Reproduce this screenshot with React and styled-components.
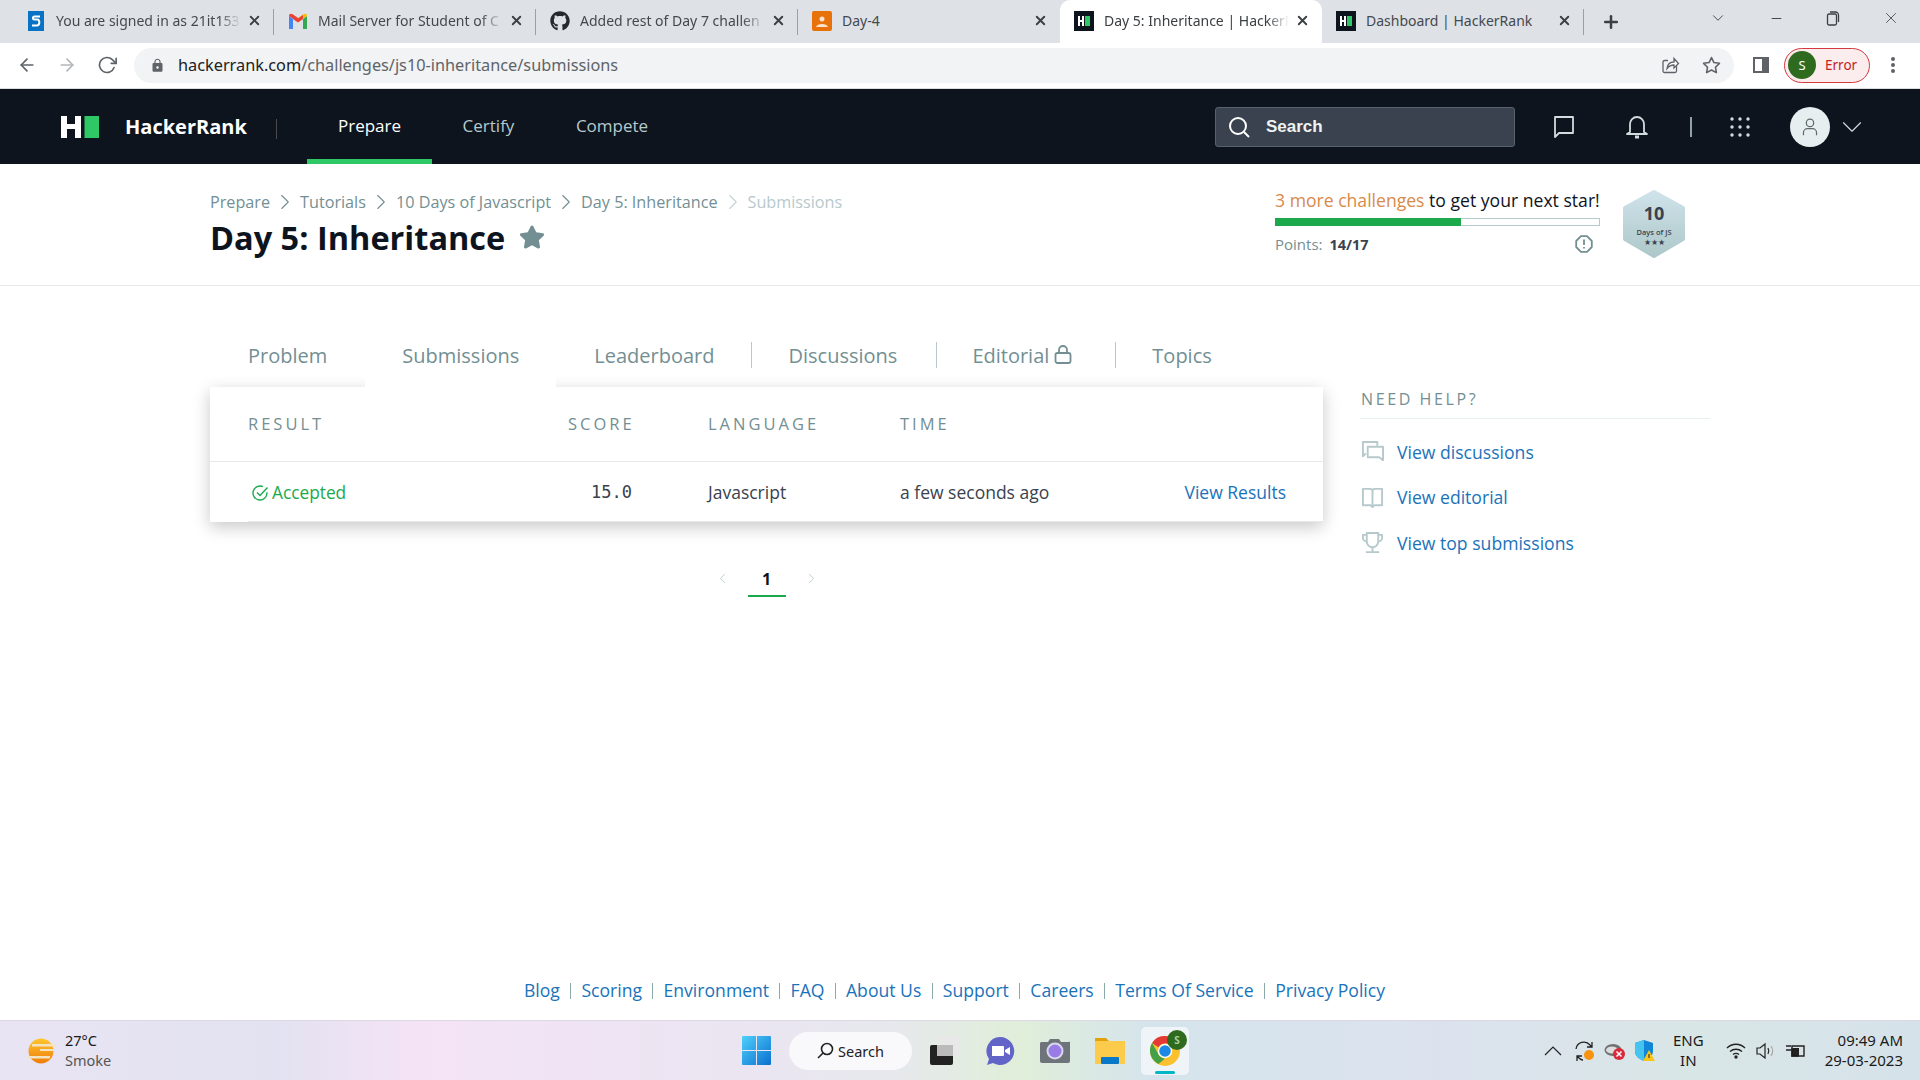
import React from "react";
import styled, { createGlobalStyle } from "styled-components";
import { FaGithub, FaStar } from "react-icons/fa";
import { FiArrowLeft, FiArrowRight, FiRotateCw, FiChevronDown, FiChevronLeft, FiChevronRight, FiStar, FiX, FiPlus, FiMinus } from "react-icons/fi";
import { MdLock } from "react-icons/md";

const GlobalStyle = createGlobalStyle`
    html, body {
        margin: 0;
        padding: 0;
        background: #fff;
        font-family: "Open Sans", sans-serif;
    }
    * { box-sizing: border-box; }
`;

const Screen = styled.div`
    width: 1920px;
    height: 1080px;
    display: flex;
    flex-direction: column;
    overflow: hidden;
`;

/* ---------- browser chrome ---------- */
const TabStrip = styled.div`
    height: 43px;
    background: #dee1e6;
    display: flex;
    padding-left: 12px;
    align-items: stretch;
`;

const Tab = styled.div`
    width: 262px;
    display: flex;
    align-items: center;
    padding: 0 12px 2px 14px;
    position: relative;
    font-family: "Noto Sans", sans-serif;
    font-size: 14px;
    color: ${(p) => (p.$active ? "#3c4043" : "#45494e")};
    background: ${(p) => (p.$active ? "#fff" : "transparent")};
    border-radius: 10px 10px 0 0;

    ${(p) => p.$sep && `
        &::after {
            content: "";
            position: absolute;
            right: 0;
            top: 9px;
            height: 26px;
            width: 1px;
            background: #9aa0a6;
        }
    `}
`;

const Favicon = styled.span`
    width: 20px;
    height: 20px;
    flex: none;
    display: flex;
    align-items: center;
    justify-content: center;
    margin-right: 10px;
`;

const TabTitle = styled.span`
    flex: 1;
    min-width: 0;
    white-space: nowrap;
    overflow: hidden;
    -webkit-mask-image: ${(p) => (p.$fade ? "linear-gradient(90deg, #000 88%, transparent 100%)" : "none")};
`;

const TabClose = styled(FiX)`
    flex: none;
    width: 15px;
    height: 15px;
    margin-left: 6px;
    color: #3c4043;
    stroke-width: 3;
`;

const NewTab = styled(FiPlus)`
    width: 20px;
    height: 20px;
    margin: 12px 0 0 17px;
    color: #3c4043;
    stroke-width: 3;
`;

const WindowControls = styled.div`
    margin-left: auto;
    display: flex;
    align-items: center;
    height: 36px;
    color: #3c4043;
    padding-right: 20px;
    gap: 42px;
`;

const Toolbar = styled.div`
    height: 46px;
    background: #fff;
    border-bottom: 1px solid #dadce0;
    display: flex;
    align-items: center;
    padding-left: 17px;
    padding-bottom: 1px;
`;

const ToolButton = styled.span`
    width: 20px;
    height: 20px;
    margin-right: ${(p) => p.$gap || 20}px;
    color: ${(p) => (p.$off ? "#b4b7ba" : "#5f6368")};
    display: flex;
    align-items: center;
    justify-content: center;
    svg { width: 20px; height: 20px; }
`;

const Omnibox = styled.div`
    width: 1600px;
    height: 35px;
    margin-left: -3px;
    background: #f1f3f4;
    border-radius: 18px;
    display: flex;
    align-items: center;
    padding: 0 13px 0 16px;
    font-family: "Noto Sans", sans-serif;
    font-size: 16.3px;
    color: #5f6368;
    b { font-weight: 400; color: #202124; }
`;

const UrlLock = styled(MdLock)`
    width: 15px;
    height: 15px;
    color: #5f6368;
    margin-right: 13px;
`;

const OmniIcons = styled.div`
    margin-left: auto;
    display: flex;
    align-items: center;
    gap: 22px;
    color: #5f6368;
`;

const ProfilePill = styled.div`
    width: 86px;
    height: 35px;
    margin-left: 14px;
    border: 1.5px solid #d33a3f;
    border-radius: 18px;
    background: #fbeced;
    display: flex;
    align-items: center;
    padding-left: 3px;
    font-family: "Noto Sans", sans-serif;
    font-size: 13.5px;
    color: #c5221f;
`;

const ProfileDot = styled.span`
    width: 28px;
    height: 28px;
    border-radius: 50%;
    background: #2f6b1f;
    color: #fff;
    display: flex;
    align-items: center;
    justify-content: center;
    font-size: 13px;
    margin-right: 9px;
`;

/* ---------- hackerrank nav ---------- */
const Nav = styled.nav`
    height: 75px;
    background: #0e141e;
    display: flex;
    align-items: stretch;
    padding-left: 61px;
    color: #fff;
`;

const Brand = styled.div`
    display: flex;
    align-items: center;
    font-weight: 700;
    font-size: 20px;
    gap: 26px;
    width: 216px;
    position: relative;
    &::after {
        content: "";
        position: absolute;
        right: 0;
        top: 30px;
        height: 20px;
        width: 1px;
        background: #4a4a4a;
    }
`;

const NavLink = styled.div`
    width: ${(p) => p.$w}px;
    display: flex;
    justify-content: center;
    align-items: center;
    font-size: 17px;
    color: ${(p) => (p.$active ? "#fff" : "#b7c9cc")};
    border-bottom: 5px solid ${(p) => (p.$active ? "#2ec866" : "transparent")};
    padding-top: 3px;
`;

const NavLinks = styled.div`
    display: flex;
    margin-left: 30px;
`;

const NavRight = styled.div`
    margin-left: auto;
    display: flex;
    align-items: center;
    padding-right: 51px;
`;

const SearchBox = styled.div`
    width: 300px;
    height: 40px;
    background: #39424e;
    border: 1px solid #576271;
    border-radius: 3px;
    display: flex;
    align-items: center;
    padding-left: 11px;
    gap: 15px;
    font-size: 17px;
    font-weight: 600;
    font-family: "Liberation Sans", sans-serif;
    color: #eef2f3;
`;

const NavIcon = styled.span`
    width: 26px;
    height: 26px;
    display: flex;
    align-items: center;
    justify-content: center;
    color: #d0dcde;
    margin-left: ${(p) => p.$ml}px;
`;

const NavDivider = styled.span`
    width: 2px;
    height: 20px;
    background: #8fa3a6;
    margin-left: 40px;
`;

const AvatarCircle = styled.span`
    width: 40px;
    height: 40px;
    border-radius: 50%;
    background: #e7eeef;
    display: flex;
    align-items: center;
    justify-content: center;
    margin-left: 37px;
    color: #5c6b70;
`;

/* ---------- page head ---------- */
const PageHead = styled.header`
    height: 122px;
    border-bottom: 1px solid #e7eaec;
`;

const Wrap = styled.div`
    width: 1500px;
    margin: 0 auto;
    display: flex;
`;

const HeadLeft = styled.div`
    flex: 1;
    padding-top: 26px;
`;

const Crumbs = styled.div`
    display: flex;
    align-items: center;
    height: 24px;
    font-size: 16.2px;
    color: #738f93;
`;

const Crumb = styled.span`
    color: ${(p) => (p.$dim ? "#b7c9cc" : "#738f93")};
`;

const CrumbSep = styled(FiChevronRight)`
    width: 26px;
    height: 26px;
    margin: 0 2px;
    stroke-width: 1;
    color: ${(p) => (p.$dim ? "#c5d3d5" : "#738f93")};
`;

const Title = styled.h1`
    margin: 2px 0 0 0;
    font-size: 32.5px;
    line-height: 44px;
    font-weight: 700;
    color: #0e141e;
    display: flex;
    align-items: center;
    gap: 14px;
    svg { width: 26px; height: 26px; color: #738f93; margin-top: -2px; }
`;

const HeadRight = styled.div`
    width: 325px;
    margin-right: 21px;
    padding-top: 23px;
    font-size: 17.6px;
    color: #0e141e;
    span.more { color: #d98a4a; }
`;

const ProgressLine = styled.div`
    line-height: 26px;
    white-space: nowrap;
`;

const Bar = styled.div`
    height: 8px;
    margin-top: 5px;
    border: 1px solid #b7c9cc;
    background: #fff;
`;

const BarFill = styled.div`
    height: 8px;
    margin: -1px;
    background: #1ba94c;
`;

const PointsRow = styled.div`
    display: flex;
    align-items: center;
    margin-top: 8px;
    font-size: 15px;
    color: #738f93;
    b { margin-left: 7px; color: #39424e; font-size: 14.5px; }
    svg { margin-left: auto; margin-right: 7px; }
`;

const Badge = styled.svg`
    width: 66px;
    height: 72px;
    margin-top: 24px;
    margin-right: 23px;
`;

/* ---------- content ---------- */
const MainCol = styled.main`
    width: 1113px;
    padding-top: 44px;
`;

const TabsRow = styled.div`
    display: flex;
    height: 57px;
`;

const HrTab = styled.div`
    height: 57px;
    padding: 12px ${(p) => p.$r || 38}px 0 ${(p) => p.$l || 38}px;
    font-size: 20px;
    line-height: 28px;
    color: #738f93;
    display: flex;
    position: relative;
    align-items: flex-start;
    gap: 5px;
    background: ${(p) => (p.$active ? "#fff" : "transparent")};
    z-index: ${(p) => (p.$active ? 2 : 0)};

    ${(p) => p.$sep && `
        &::after {
            content: "";
            position: absolute;
            right: 0;
            top: 12px;
            height: 26px;
            width: 1px;
            background: #b7c9cc;
        }
    `}
`;

const Card = styled.section`
    height: 135px;
    background: #fff;
    box-shadow: 0 5px 16px rgba(0, 0, 0, 0.22);
    position: relative;
    z-index: 1;
`;

const GridRow = styled.div`
    display: grid;
    grid-template-columns: 320px 140px 192px 1fr auto;
    align-items: center;
    margin-left: ${(p) => (p.$head ? 0 : 38)}px;
    padding: ${(p) => (p.$head ? "0 37px 1px 38px" : "0 37px 0 0")};
    height: ${(p) => p.$h}px;
    border-bottom: 1px solid #e7eaec;
`;

const HeadCell = styled.span`
    font-size: 16.5px;
    letter-spacing: 3px;
    color: #738f93;
`;

const Cell = styled.span`
    font-size: 17.5px;
    color: #39424e;
`;

const AcceptedCell = styled.span`
    display: flex;
    align-items: center;
    gap: 3px;
    padding: 1px 0 0 3px;
    color: #1ba94c;
    font-size: 17.3px;
    svg { margin-top: 2px; }
`;

const ScoreCell = styled.span`
    font-family: "DejaVu Sans Mono", monospace;
    font-size: 17px;
    color: #39424e;
    padding-left: 23px;
`;

const ResultLink = styled.span`
    color: #1a73ba;
    font-size: 17.5px;
`;

const Pager = styled.div`
    display: flex;
    align-items: flex-start;
    justify-content: center;
    margin-top: 45px;
    width: 1113px;
    color: #c0cdcf;
    svg { width: 17px; height: 17px; margin-top: 3px; stroke-width: 1.4; }
`;

const PageNum = styled.span`
    width: 38px;
    height: 30px;
    margin: 0 17px;
    text-align: center;
    font-size: 16px;
    line-height: 24px;
    font-weight: 700;
    color: #0e141e;
    border-bottom: 2px solid #1ba94c;
`;

const SideCol = styled.aside`
    width: 350px;
    margin-left: 37px;
    padding-top: 101px;
`;

const SideTitle = styled.div`
    font-size: 16px;
    line-height: 24px;
    letter-spacing: 2.6px;
    color: #738f93;
    padding-left: 1px;
    padding-bottom: 7px;
    border-bottom: 1px solid #e7eeef;
    margin-bottom: 10px;
`;

const SideLink = styled.div`
    height: 45.5px;
    display: flex;
    align-items: center;
    gap: 13px;
    padding-left: 1px;
    font-size: 17.6px;
    color: #1a73ba;
    svg { width: 23px; height: 23px; color: #b7c9cc; flex: none; }
`;

const Body = styled.div`
    flex: 1;
`;

const Footer = styled.footer`
    height: 42px;
    display: flex;
    justify-content: center;
    padding-right: 11px;
    font-size: 17.6px;
    line-height: 24px;
    color: #1a73ba;
`;

const FootSep = styled.span`
    width: 1px;
    height: 16px;
    background: #8aa;
    margin: 5px 10.25px 0;
`;

/* ---------- taskbar ---------- */
const Taskbar = styled.div`
    height: 60px;
    border-top: 1px solid #dcd8e6;
    background: linear-gradient(90deg, #e9e4f3 0%, #e2e2f1 14%, #f4e3f5 22%, #ebe5f2 38%, #e7e8ee 46%, #e0eed9 53%, #d5e4ec 60%, #dbe2ee 75%, #d9e6e6 88%, #d6e2ea 100%);
    display: grid;
    grid-template-columns: 742px auto 1fr;
    align-items: center;
`;

const Weather = styled.div`
    display: flex;
    align-items: center;
    padding-left: 26px;
    gap: 9px;
    font-family: "Noto Sans", sans-serif;
    font-size: 14.5px;
    line-height: 20px;
    color: #1a1a1a;
    small { display: block; font-size: 14.5px; color: #555; }
    div { margin-top: -2px; }
`;

const TaskCenter = styled.div`
    display: flex;
    align-items: center;
`;

const TaskSearch = styled.div`
    width: 123px;
    height: 38px;
    margin: 0 18px;
    border-radius: 19px;
    background: #f9f8fb;
    display: flex;
    align-items: center;
    padding-left: 28px;
    gap: 4px;
    font-family: "Noto Sans", sans-serif;
    font-size: 14.5px;
    color: #222;
`;

const TaskIcon = styled.span`
    width: ${(p) => p.$w || 30}px;
    height: 30px;
    margin-right: ${(p) => p.$mr || 25}px;
    display: flex;
`;

const ActiveApp = styled.div`
    width: 48px;
    height: 48px;
    margin-left: -9px;
    background: #eef4f7;
    border-radius: 5px;
    position: relative;
    padding: 9px;
    &::after {
        content: "";
        position: absolute;
        left: 14px;
        bottom: 1px;
        width: 20px;
        height: 3px;
        border-radius: 2px;
        background: #00b7c3;
    }
`;

const AppBadge = styled.span`
    position: absolute;
    top: 3px;
    right: 2px;
    width: 20px;
    height: 20px;
    border-radius: 50%;
    background: #2f6b1f;
    color: #a9cf98;
    font-family: "Noto Sans", sans-serif;
    font-weight: 700;
    font-size: 10px;
    text-align: center;
    line-height: 20px;
`;

const Tray = styled.div`
    display: flex;
    align-items: center;
    justify-content: flex-end;
    padding-right: 17px;
    font-family: "Noto Sans", sans-serif;
    font-size: 15px;
    color: #1a1a1a;
`;

const TrayIcon = styled.span`
    display: flex;
    margin-right: ${(p) => p.$mr || 10}px;
`;

const TrayText = styled.div`
    text-align: ${(p) => p.$align};
    line-height: 20px;
    margin-top: -2px;
    margin-right: ${(p) => p.$mr || 0}px;
`;

/* ---------- small drawings ---------- */
const HrMark = ({ size = 20 }) => (
    <svg width={size} height={size} viewBox="0 0 20 20">
        <rect width="20" height="20" fill="#0e141e" />
        <path d="M4 5h2v4h2V5h2v10H8v-4H6v4H4z" fill="#fff" />
        <rect x="11" y="5" width="5" height="10" fill="#2ec866" />
    </svg>
);

const GmailIcon = () => (
    <svg width="20" height="16" viewBox="0 0 20 16">
        <path d="M1 16V3l4 3v10z" fill="#4285f4" />
        <path d="M15 16V6l4-3v13z" fill="#34a853" />
        <path d="M1 3c0-2 2-3 4-1.5L10 5v4L1 3z" fill="#ea4335" />
        <path d="M19 3c0-2-2-3-4-1.5L10 5v4l9-6z" fill="#fbbc04" />
        <path d="M5 2l5 3.5L15 2v4l-5 3.5L5 6z" fill="#ea4335" />
    </svg>
);

const ShareIcon = () => (
    <svg width="20" height="20" viewBox="0 0 20 20" fill="none" stroke="#5f6368" strokeWidth="1.3">
        <path d="M16.5 10.5V16a1.5 1.5 0 0 1-1.5 1.5H4.5A1.5 1.5 0 0 1 3 16V7a1.5 1.5 0 0 1 1.5-1.5H8" />
        <path d="M7 13.5c.5-4 3-6.5 7-6.5V3.5l4.5 5L14 13v-3c-3 0-5 1-7 3.5z" fill="#fff" />
    </svg>
);

const InfoOctagon = () => (
    <svg width="18" height="18" viewBox="0 0 18 18" fill="none">
        <path d="M6 1.2h6L16.8 6v6L12 16.8H6L1.2 12V6z" stroke="#738f93" strokeWidth="1.8" strokeLinejoin="round" />
        <path d="M9 4.5v5.5M9 12v1.5" stroke="#738f93" strokeWidth="1.8" />
    </svg>
);

const Chrome = ({ size = 30 }) => (
    <svg width={size} height={size} viewBox="0 0 30 30">
        <circle cx="15" cy="15" r="15" fill="#fbc02d" />
        <path d="M15 0a15 15 0 0 1 13 7.5H15a7.5 7.5 0 0 0-6.5 3.75L2 7A15 15 0 0 1 15 0z" fill="#e53935" />
        <path d="M2 7l6.5 11.25A7.5 7.5 0 0 0 15 22.5L8.5 28A15 15 0 0 1 2 7z" fill="#43a047" />
        <circle cx="15" cy="15" r="7.2" fill="#fff" />
        <circle cx="15" cy="15" r="5.8" fill="#1e88e5" />
    </svg>
);

const App = () => {
    const tabs = [
        { title: "You are signed in as 21it153", icon: <svg width="16" height="20" viewBox="0 0 16 20"><rect width="16" height="20" fill="#0872c4" /><path d="M12 5.5H6.5c-2 0-2 3 0 3h3c2.5 0 2.5 6-.5 6H4" stroke="#fff" strokeWidth="2" fill="none" /></svg> },
        { title: "Mail Server for Student of C", icon: <GmailIcon /> },
        { title: "Added rest of Day 7 challen", icon: <FaGithub size={20} color="#24292f" /> },
        { title: "Day-4", plain: true, icon: <svg width="20" height="20" viewBox="0 0 20 20"><rect width="20" height="20" rx="2" fill="#e8710a" /><circle cx="10" cy="8" r="2.5" fill="#fbe3cc" /><path d="M4 16c1-4 11-4 12 0z" fill="#fbe3cc" /></svg> },
        { title: "Day 5: Inheritance | HackerR", active: true, icon: <HrMark /> },
        { title: "Dashboard | HackerRank", plain: true, icon: <HrMark /> },
    ];
    const footerLinks = ["Blog", "Scoring", "Environment", "FAQ", "About Us", "Support", "Careers", "Terms Of Service", "Privacy Policy"];

    return (
        <Screen>
            <GlobalStyle />
            <TabStrip>
                {tabs.map((tab, index) => (
                    <Tab key={index} $active={tab.active} $sep={!tab.active && index !== 3}>
                        <Favicon>{tab.icon}</Favicon>
                        <TabTitle $fade={!tab.plain}>{tab.title}</TabTitle>
                        <TabClose />
                    </Tab>
                ))}
                <NewTab />
                <WindowControls>
                    <FiChevronDown size={18} strokeWidth={1.2} />
                    <FiMinus size={15} strokeWidth={1.5} />
                    <svg width="14" height="15" viewBox="0 0 14 15" fill="none" stroke="#3c4043" strokeWidth="1.3"><rect x="1.5" y="3" width="9" height="11" rx="1.5" /><path d="M4 1h5.5A3 3 0 0 1 12.5 4v7" /></svg>
                    <FiX size={18} strokeWidth={1.1} />
                </WindowControls>
            </TabStrip>

            <Toolbar>
                <ToolButton><FiArrowLeft /></ToolButton>
                <ToolButton $off><FiArrowRight /></ToolButton>
                <ToolButton $gap={20}><FiRotateCw /></ToolButton>
                <Omnibox>
                    <UrlLock />
                    <span><b>hackerrank.com</b>/challenges/js10-inheritance/submissions</span>
                    <OmniIcons>
                        <ShareIcon />
                        <FiStar size={19} />
                    </OmniIcons>
                </Omnibox>
                <svg width="18" height="18" viewBox="0 0 18 18" style={{ marginLeft: 18 }}>
                    <path d="M1 1h16v16H1z" fill="#5f6368" />
                    <path d="M3 3h7v12H3z" fill="#fff" />
                </svg>
                <ProfilePill>
                    <ProfileDot>S</ProfileDot>
                    Error
                </ProfilePill>
                <svg width="4" height="18" viewBox="0 0 4 18" style={{ marginLeft: 21 }} fill="#5f6368">
                    <circle cx="2" cy="3" r="2" /><circle cx="2" cy="9" r="2" /><circle cx="2" cy="15" r="2" />
                </svg>
            </Toolbar>

            <Nav>
                <Brand>
                    <svg width="38" height="22" viewBox="0 0 38 22">
                        <path d="M0 0h6v8h8V0h6v22h-6v-9H6v9H0z" fill="#fff" />
                        <rect x="23.5" y="0" width="14.5" height="22" fill="#2ec866" />
                    </svg>
                    HackerRank
                </Brand>
                <NavLinks>
                    <NavLink $w={125} $active>Prepare</NavLink>
                    <NavLink $w={113}>Certify</NavLink>
                    <NavLink $w={134}>Compete</NavLink>
                </NavLinks>
                <NavRight>
                    <SearchBox>
                        <svg width="24" height="24" viewBox="0 0 24 24" fill="none" stroke="#fff" strokeWidth="2"><circle cx="11" cy="11" r="8" /><path d="M17 17l5 5" /></svg>
                        Search
                    </SearchBox>
                    <NavIcon $ml={36}>
                        <svg width="22" height="24" viewBox="0 0 22 24" fill="none" stroke="currentColor" strokeWidth="1.8" strokeLinejoin="round"><path d="M2 2h18v16H6l-4 4z" /></svg>
                    </NavIcon>
                    <NavIcon $ml={47}>
                        <svg width="24" height="26" viewBox="0 0 24 26" fill="none" stroke="currentColor" strokeWidth="1.8" strokeLinejoin="round"><path d="M5 18V10a7 7 0 0 1 14 0v8l3 2H2z" /><path d="M10 23h4" strokeWidth="3" /></svg>
                    </NavIcon>
                    <NavDivider />
                    <NavIcon $ml={35}>
                        <svg width="22" height="22" viewBox="0 0 22 22" fill="currentColor">
                            {[3, 11, 19].map((y) => [3, 11, 19].map((x) => <circle key={`${x}-${y}`} cx={x} cy={y} r="1.7" />))}
                        </svg>
                    </NavIcon>
                    <AvatarCircle>
                        <svg width="18" height="20" viewBox="0 0 22 24" fill="none" stroke="currentColor" strokeWidth="1.5"><circle cx="11" cy="7" r="4.5" /><path d="M3 22v-3a5 5 0 0 1 5-5h6a5 5 0 0 1 5 5v3" /></svg>
                    </AvatarCircle>
                    <FiChevronDown size={34} strokeWidth={0.8} color="#d0dcde" style={{ marginLeft: 5 }} />
                </NavRight>
            </Nav>

            <PageHead>
                <Wrap>
                    <HeadLeft>
                        <Crumbs>
                            <Crumb>Prepare</Crumb>
                            <CrumbSep />
                            <Crumb>Tutorials</Crumb>
                            <CrumbSep />
                            <Crumb>10 Days of Javascript</Crumb>
                            <CrumbSep />
                            <Crumb>Day 5: Inheritance</Crumb>
                            <CrumbSep $dim />
                            <Crumb $dim>Submissions</Crumb>
                        </Crumbs>
                        <Title>Day 5: Inheritance <FaStar /></Title>
                    </HeadLeft>
                    <HeadRight>
                        <ProgressLine><span className="more">3 more challenges</span> to get your next star!</ProgressLine>
                        <Bar><BarFill style={{ width: `${(14 / 17) * 70}%` }} /></Bar>
                        <PointsRow>
                            Points: <b>14/17</b>
                            <InfoOctagon />
                        </PointsRow>
                    </HeadRight>
                    <Badge viewBox="0 0 66 72">
                        <defs>
                            <linearGradient id="hexFill" x1="0" y1="0" x2="0" y2="1">
                                <stop offset="0" stopColor="#cfe2ea" />
                                <stop offset="1" stopColor="#adc8ca" />
                            </linearGradient>
                        </defs>
                        <path d="M33 4L62 20v31L33 68 4 51V20z" fill="url(#hexFill)" stroke="url(#hexFill)" strokeWidth="4" strokeLinejoin="round" />
                        <text x="33" y="32" textAnchor="middle" fontSize="18" fontWeight="700" fill="#39424e">10</text>
                        <text x="33" y="46.5" textAnchor="middle" fontSize="7.5" fontWeight="600" fill="#39424e">Days of JS</text>
                        <text x="33" y="57" textAnchor="middle" fontSize="8" fill="#39424e">★★★</text>
                    </Badge>
                </Wrap>
            </PageHead>

            <Body>
                <Wrap>
                    <MainCol>
                        <TabsRow>
                            <HrTab $l={38} $r={38}>Problem</HrTab>
                            <HrTab $active $l={37} $r={37}>Submissions</HrTab>
                            <HrTab $sep>Leaderboard</HrTab>
                            <HrTab $sep $l={36} $r={40}>Discussions</HrTab>
                            <HrTab $sep $l={35} $r={44}>Editorial
                                <svg width="18" height="26" viewBox="0 0 18 26" fill="none" stroke="#738f93" strokeWidth="1.8"><rect x="1.5" y="11" width="15" height="10" rx="2" /><path d="M5 11V8a4 4 0 0 1 8 0v3" /></svg>
                            </HrTab>
                            <HrTab $l={36}>Topics</HrTab>
                        </TabsRow>
                        <Card>
                            <GridRow $head $h={75}>
                                <HeadCell>RESULT</HeadCell>
                                <HeadCell>SCORE</HeadCell>
                                <HeadCell>LANGUAGE</HeadCell>
                                <HeadCell>TIME</HeadCell>
                            </GridRow>
                            <GridRow $h={60}>
                                <AcceptedCell>
                                    <svg width="18" height="18" viewBox="0 0 18 18" fill="none" stroke="#1ba94c" strokeWidth="1.4"><path d="M16 8.2V9a7 7 0 1 1-4-6.3" /><path d="M6 8.5l3 3 7.5-8" /></svg>
                                    Accepted
                                </AcceptedCell>
                                <ScoreCell>15.0</ScoreCell>
                                <Cell>Javascript</Cell>
                                <Cell>a few seconds ago</Cell>
                                <ResultLink>View Results</ResultLink>
                            </GridRow>
                        </Card>
                        <Pager>
                            <FiChevronLeft />
                            <PageNum>1</PageNum>
                            <FiChevronRight />
                        </Pager>
                    </MainCol>
                    <SideCol>
                        <SideTitle>NEED HELP?</SideTitle>
                        <SideLink>
                            <svg viewBox="0 0 24 24" fill="none" stroke="currentColor" strokeWidth="2" strokeLinejoin="round"><path d="M17 6V2H2v15l3-3" /><path d="M7 7h16v14l-4-3H7z" /></svg>
                            View discussions
                        </SideLink>
                        <SideLink>
                            <svg viewBox="0 0 24 24" fill="none" stroke="currentColor" strokeWidth="2" strokeLinejoin="round"><path d="M2 3h8l2 1 2-1h8v17h-8l-2 2-2-2H2z" /><path d="M12 4v18" /></svg>
                            View editorial
                        </SideLink>
                        <SideLink>
                            <svg viewBox="0 0 24 24" fill="none" stroke="currentColor" strokeWidth="2" strokeLinejoin="round"><path d="M6 2h12v9a6 6 0 0 1-12 0z" /><path d="M6 4H2v3a4 4 0 0 0 4 4M18 4h4v3a4 4 0 0 1-4 4M12 17v4M5 22h14" /></svg>
                            View top submissions
                        </SideLink>
                    </SideCol>
                </Wrap>
            </Body>

            <Footer>
                {footerLinks.map((link, index) => (
                    <React.Fragment key={link}>
                        {index > 0 && <FootSep />}
                        <span>{link}</span>
                    </React.Fragment>
                ))}
            </Footer>

            <Taskbar>
                <Weather>
                    <svg width="30" height="28" viewBox="0 0 30 28">
                        <defs>
                            <linearGradient id="sun" x1="0" y1="0" x2="0" y2="1">
                                <stop offset="0" stopColor="#fdc72e" />
                                <stop offset="1" stopColor="#f07c0a" />
                            </linearGradient>
                        </defs>
                        <circle cx="15" cy="14" r="12.5" fill="url(#sun)" />
                        <path d="M6 7h24v2.5H6zM2 19h22v2.5H2zM14 12h14v2H14z" fill="#f3e3c0" />
                    </svg>
                    <div>27°C<small>Smoke</small></div>
                </Weather>
                <TaskCenter>
                    <svg width="29" height="29" viewBox="0 0 29 29">
                        <defs>
                            <linearGradient id="win" x1="0" y1="0" x2="1" y2="1">
                                <stop offset="0" stopColor="#4fd0fb" />
                                <stop offset="1" stopColor="#0a6fd0" />
                            </linearGradient>
                        </defs>
                        <path d="M1 0h13v14H0V1a1 1 0 0 1 1-1zM15 0h13a1 1 0 0 1 1 1v13H15zM0 15h14v14H1a1 1 0 0 1-1-1zM15 15h14v13a1 1 0 0 1-1 1H15z" fill="url(#win)" />
                    </svg>
                    <TaskSearch>
                        <svg width="17" height="17" viewBox="0 0 17 17" fill="none" stroke="#222" strokeWidth="1.6"><circle cx="10" cy="7" r="5.5" /><path d="M6 11l-5 5" /></svg>
                        Search
                    </TaskSearch>
                    <TaskIcon>
                        <svg width="30" height="30" viewBox="0 0 30 30">
                            <rect x="0" y="9" width="23" height="20" rx="2" fill="#222" />
                            <rect x="7" y="0" width="23" height="20" rx="2" fill="#e8e8e8" />
                            <rect x="7" y="9" width="16" height="11" fill="#bbb" />
                        </svg>
                    </TaskIcon>
                    <TaskIcon>
                        <svg width="30" height="30" viewBox="0 0 30 30">
                            <path d="M15 1a14 14 0 1 1-7 26l-6 2 2-6A14 14 0 0 1 15 1z" fill="#6264c8" />
                            <path d="M7 10h11a1 1 0 0 1 1 1v8a1 1 0 0 1-1 1H7z" fill="#fff" />
                            <path d="M20 14l5-3v8l-5-3z" fill="#fff" />
                        </svg>
                    </TaskIcon>
                    <TaskIcon>
                        <svg width="30" height="30" viewBox="0 0 30 30">
                            <path d="M1 6h7l2-3h9l2 3h7a2 2 0 0 1 2 0v19a2 2 0 0 1-2 2H2a2 2 0 0 1-2-2V7z" fill="#6e7479" />
                            <circle cx="15" cy="15" r="8.5" fill="#d8d8ee" />
                            <circle cx="15" cy="15" r="6.5" fill="#9a7ce8" />
                        </svg>
                    </TaskIcon>
                    <TaskIcon>
                        <svg width="30" height="30" viewBox="0 0 30 30">
                            <path d="M0 2h11l3 3h16v5H0z" fill="#e4a008" />
                            <rect x="0" y="5" width="30" height="23" rx="1" fill="#fccb4c" />
                            <rect x="6" y="21" width="18" height="7" rx="1" fill="#0a78c8" />
                        </svg>
                    </TaskIcon>
                    <ActiveApp>
                        <Chrome />
                        <AppBadge>S</AppBadge>
                    </ActiveApp>
                </TaskCenter>
                <Tray>
                    <TrayIcon $mr={12}>
                        <svg width="18" height="10" viewBox="0 0 18 10" fill="none" stroke="#222" strokeWidth="1.2"><path d="M1 9l8-8 8 8" /></svg>
                    </TrayIcon>
                    <TrayIcon $mr={8}>
                        <svg width="22" height="22" viewBox="0 0 22 22" fill="none" stroke="#222" strokeWidth="1.3"><path d="M2 9a8 8 0 0 1 14-4l2 2M18 2v5h-5" /><path d="M3 16l2 2c1 1 2 2 4 2M3 21v-5h5" /><circle cx="15" cy="15" r="5" fill="#f7930e" stroke="none" /></svg>
                    </TrayIcon>
                    <TrayIcon $mr={9}>
                        <svg width="22" height="20" viewBox="0 0 22 20"><ellipse cx="9" cy="9" rx="8.5" ry="6" fill="#707070" /><ellipse cx="8" cy="9" rx="6" ry="3.5" fill="#ddd" /><circle cx="15" cy="13" r="6" fill="#d82a3a" /><path d="M12.5 10.5l5 5m0-5l-5 5" stroke="#fff" strokeWidth="1.5" /></svg>
                    </TrayIcon>
                    <TrayIcon $mr={18}>
                        <svg width="20" height="22" viewBox="0 0 20 22"><path d="M9 0l9 3v8c0 5-4 8-9 10-5-2-9-5-9-10V3z" fill="#0f86d8" /><path d="M9 0v21c-5-2-9-5-9-10V3z" fill="#46c4f0" /><path d="M14 10l6 11H8z" fill="#fcc419" /><path d="M14 14v4" stroke="#222" /></svg>
                    </TrayIcon>
                    <TrayText $align="center" $mr={22}>ENG<br />IN</TrayText>
                    <TrayIcon $mr={10}>
                        <svg width="20" height="16" viewBox="0 0 20 16" fill="none" stroke="#222" strokeWidth="1.4"><path d="M1 5c5-5 13-5 18 0M4 8.5c3.5-3 8.5-3 12 0M7 11.5c2-1.5 4-1.5 6 0" /><circle cx="10" cy="14" r="1" fill="#222" /></svg>
                    </TrayIcon>
                    <TrayIcon $mr={10}>
                        <svg width="20" height="18" viewBox="0 0 20 18" fill="none" stroke="#222" strokeWidth="1.2"><path d="M1 6h3l5-4v14l-5-4H1z" /><path d="M12 6c1 2 1 4 0 6" /><path d="M15 4c2 3 2 7 0 10" stroke="#aaa" /></svg>
                    </TrayIcon>
                    <TrayIcon $mr={19}>
                        <svg width="20" height="16" viewBox="0 0 20 16"><path d="M6 3h12v10H6z" fill="none" stroke="#222" strokeWidth="1.4" /><path d="M6 6h6v7H6zM0 3h5M0 7h5" stroke="#222" strokeWidth="1.6" /><rect x="7" y="5" width="6" height="7" fill="#222" /></svg>
                    </TrayIcon>
                    <TrayText $align="right">09:49 AM<br />29-03-2023</TrayText>
                </Tray>
            </Taskbar>
        </Screen>
    );
};

export default App;
